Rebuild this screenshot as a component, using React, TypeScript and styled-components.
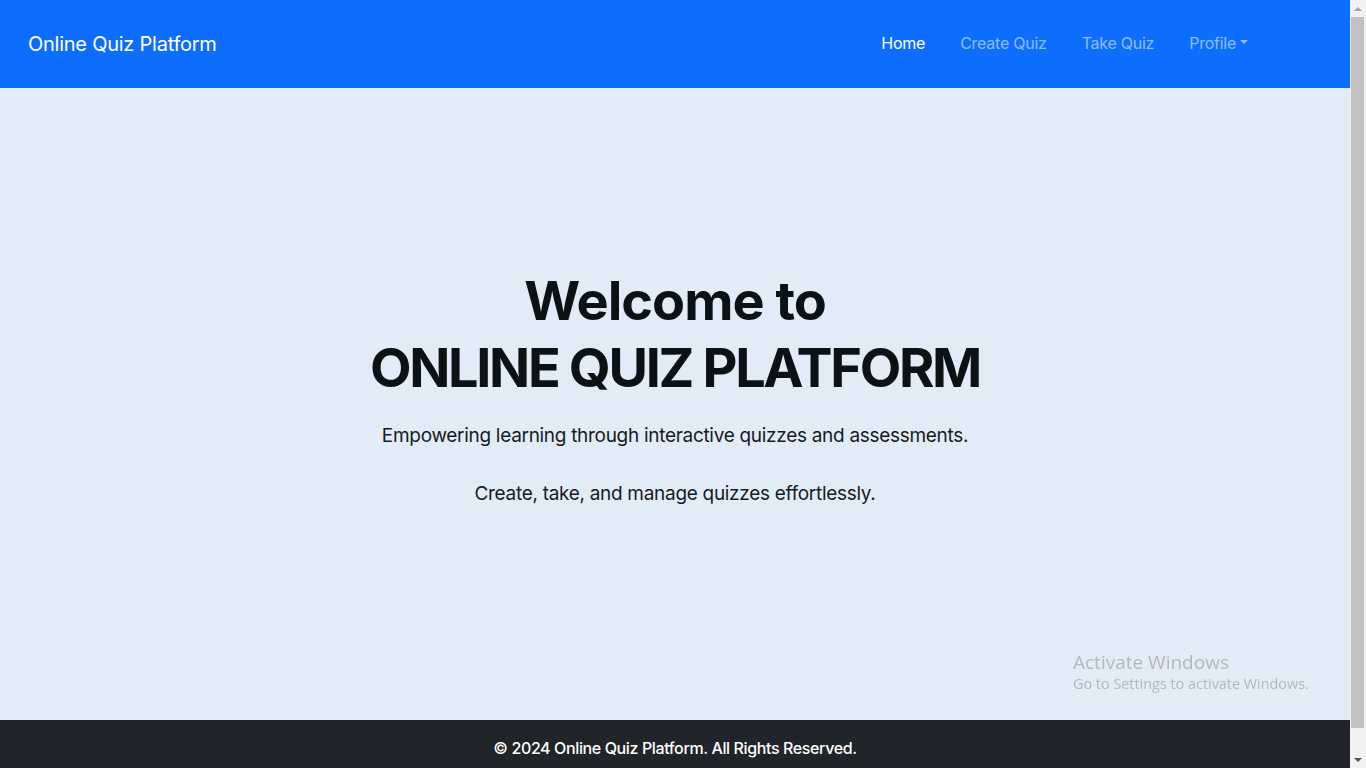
import React from "react";
import styled, { createGlobalStyle } from "styled-components";

const Global = createGlobalStyle`
  html, body { margin: 0; padding: 0; }
  body {
    font-family: Inter, "Noto Sans", sans-serif;
    background: #e2ecf6;
    color: #0b1215;
  }
  * { box-sizing: border-box; }
`;

const Page = styled.div`
  display: flex;
  flex-direction: column;
  min-height: 100vh;
  margin-right: 16px;
`;

const NavBar = styled.nav`
  height: 88px;
  background: #0d6efd;
  display: flex;
  align-items: center;
  justify-content: space-between;
  padding: 0 102px 0 28px;
`;

const Brand = styled.a`
  color: #fff;
  font-size: 20px;
  font-weight: 400;
  letter-spacing: -0.25px;
  text-decoration: none;
`;

const NavList = styled.ul`
  list-style: none;
  display: flex;
  margin: 0 0 2px;
  padding: 0;
  gap: 35px;
`;

const NavLink = styled.a<{ $active?: boolean }>`
  color: ${(p) => (p.$active ? "#ffffff" : "rgba(255,255,255,0.55)")};
  font-size: 16px;
  letter-spacing: -0.25px;
  text-decoration: none;
  display: inline-flex;
  align-items: center;
`;

const Caret = styled.span`
  display: inline-block;
  margin-left: 4px;
  border-top: 4px solid currentColor;
  border-left: 4px solid transparent;
  border-right: 4px solid transparent;
  transform: translateY(-1px);
`;

const Hero = styled.main`
  height: 632px;
  display: flex;
  flex-direction: column;
  align-items: center;
  justify-content: center;
  text-align: center;
  padding-bottom: 32px;
`;

const Title = styled.h1`
  margin: 0 0 20px;
  font-size: 54px;
  line-height: 67px;
  font-weight: 700;
  color: #0b1215;
`;

const TitleLine = styled.span<{ $ls: number }>`
  display: block;
  letter-spacing: ${(p) => p.$ls}px;
`;

const Lead = styled.p<{ $gap?: number }>`
  margin: 0 0 ${(p) => p.$gap ?? 28}px;
  font-size: 19px;
  line-height: 30px;
  font-weight: 400;
  letter-spacing: -0.3px;
  color: #161b1f;
`;

const Footer = styled.footer`
  background: #212529;
  color: #fff;
  text-align: center;
  padding: 16px;
`;

const FooterText = styled.p`
  margin: 0 0 16px;
  font-size: 16px;
  line-height: 24px;
  font-weight: 500;
  letter-spacing: -0.38px;
`;

const Watermark = styled.div`
  position: fixed;
  left: 1073px;
  top: 650px;
  color: rgba(150, 150, 150, 0.6);
  font-family: "Open Sans", "Noto Sans", sans-serif;
  pointer-events: none;
`;

const WmTitle = styled.div`
  font-size: 19px;
  line-height: 24px;
`;

const WmSub = styled.div`
  font-size: 14.4px;
  line-height: 20px;
`;

/* Browser scrollbar as seen in the capture */
const ScrollBar = styled.div`
  position: fixed;
  top: 0;
  right: 0;
  width: 16px;
  height: 100vh;
  background: #f1f1f1;
  display: flex;
  flex-direction: column;
`;

const ScrollButton = styled.div`
  height: 17px;
  flex: none;
  display: flex;
  align-items: center;
  justify-content: center;
`;

const Arrow = styled.span<{ $down?: boolean; $color: string }>`
  width: 0;
  height: 0;
  border-left: 4px solid transparent;
  border-right: 4px solid transparent;
  ${(p) =>
    p.$down
      ? `border-top: 4px solid ${p.$color};`
      : `border-bottom: 4px solid ${p.$color};`}
`;

const Track = styled.div`
  flex: 1;
  padding: 0 2px 0 1px;
`;

const Thumb = styled.div`
  height: 711px;
  background: #c1c1c1;
`;

export default function App() {
  return (
    <>
      <Global />
      <Page>
        <NavBar>
          <Brand href="#">Online Quiz Platform</Brand>
          <NavList>
            <li><NavLink $active href="#">Home</NavLink></li>
            <li><NavLink href="#">Create Quiz</NavLink></li>
            <li><NavLink href="#">Take Quiz</NavLink></li>
            <li><NavLink href="#">Profile<Caret /></NavLink></li>
          </NavList>
        </NavBar>
        <Hero>
          <Title>
            <TitleLine $ls={-1}>Welcome to</TitleLine>
            <TitleLine $ls={-2.33}>ONLINE QUIZ PLATFORM</TitleLine>
          </Title>
          <Lead>Empowering learning through interactive quizzes and assessments.</Lead>
          <Lead $gap={0}>Create, take, and manage quizzes effortlessly.</Lead>
        </Hero>
        <Footer>
          <FooterText>© 2024 Online Quiz Platform. All Rights Reserved.</FooterText>
        </Footer>
      </Page>
      <Watermark>
        <WmTitle>Activate Windows</WmTitle>
        <WmSub>Go to Settings to activate Windows.</WmSub>
      </Watermark>
      <ScrollBar>
        <ScrollButton><Arrow $color="#a3a3a3" /></ScrollButton>
        <Track><Thumb /></Track>
        <ScrollButton><Arrow $down $color="#505050" /></ScrollButton>
      </ScrollBar>
    </>
  );
}
